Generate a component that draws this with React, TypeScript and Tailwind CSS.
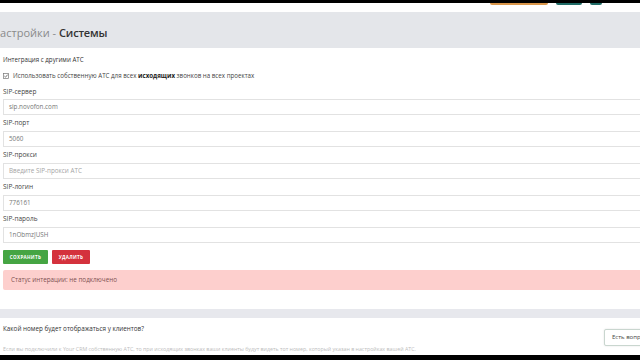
import React from 'react';

const fields = [
  { label: 'SIP-сервер', value: 'sip.novofon.com', placeholder: false },
  { label: 'SIP-порт', value: '5060', placeholder: false },
  { label: 'SIP-прокси', value: 'Введите SIP-прокси АТС', placeholder: true },
  { label: 'SIP-логин', value: '776161', placeholder: false },
  { label: 'SIP-пароль', value: '1nObmzJUSH', placeholder: false },
];

const CheckIcon = () => (
  <svg width="6" height="6" viewBox="0 0 6 6" className="shrink-0">
    <rect x="0.5" y="0.5" width="5" height="5" fill="white" stroke="#777" strokeWidth="0.7" />
    <path d="M1.4 3.1 L2.5 4.2 L4.7 1.6" fill="none" stroke="#555" strokeWidth="0.8" />
  </svg>
);

const App = () => {
  return (
    <div className="w-[640px] h-[360px] overflow-hidden bg-white flex flex-col font-['Open_Sans',sans-serif] text-[#333]">
      <div className="h-[3px] bg-black shrink-0" />
      <div className="h-[9px] shrink-0 bg-white flex items-start justify-end pr-[38px] gap-[8px]">
        <div className="w-[58px] h-[2px] bg-[#d9964a] rounded-b-sm" />
        <div className="w-[26px] h-[2px] bg-[#1f6b66] rounded-b-sm" />
        <div className="w-[12px] h-[2px] bg-[#1f6b66] rounded-b-sm" />
      </div>

      <div className="h-[36px] shrink-0 bg-[#e4e6ea] flex items-center gap-[3px] pt-[6px] -ml-[8px]">
        <span className="text-[11px] text-[#8a8a8a]">Настройки -</span>
        <span className="text-[11px] font-semibold tracking-[-0.2px] text-[#333]">Системы</span>
      </div>

      <div className="h-[261px] shrink-0 flex flex-col px-[3px]">
        <div className="mt-[4px] h-[16px] flex items-center text-[6.2px] text-[#333]">Интеграция с другими АТС</div>
        <div className="h-[16px] flex items-center gap-[4px] text-[6.2px] text-[#444]">
          <CheckIcon />
          <span>
            Использовать собственную АТС для всех <b className="font-bold text-[#222]">исходящих</b> звонков на всех проектах
          </span>
        </div>
        {fields.map((f, i) => (
          <div key={f.label} className="flex flex-col">
            <div className={`${i === 0 ? 'h-[15px]' : 'h-[16px]'} flex items-center text-[6.5px] text-[#444]`}>{f.label}</div>
            <div className="w-[700px] h-[16px] border border-[#e2e2e2] bg-white flex items-center pl-[5px]">
              <span className={`text-[6.3px] ${f.placeholder ? 'text-[#a5a5a5]' : 'text-[#777]'}`}>{f.value}</span>
            </div>
          </div>
        ))}
        <div className="mt-[7px] h-[14px] flex gap-[4px]">
          <div className="w-[45px] h-[14px] bg-[#45a543] rounded-[1px] flex items-center justify-center text-[4.6px] font-bold text-white tracking-[0.3px]">
            СОХРАНИТЬ
          </div>
          <div className="w-[38px] h-[14px] bg-[#d4323d] rounded-[1px] flex items-center justify-center text-[4.6px] font-bold text-white tracking-[0.3px]">
            УДАЛИТЬ
          </div>
        </div>
        <div className="mt-[6px] w-[700px] h-[20px] bg-[#fdcfcd] rounded-[2px] flex items-center pl-[8px] text-[6.3px] text-[#7d5252]">
          Статус интерации: не подключено
        </div>
      </div>

      <div className="h-[9px] shrink-0 bg-[#e7e8ed]" />

      <div className="h-[37px] shrink-0 flex justify-between">
        <div className="flex flex-col px-[3px]">
          <div className="h-[20px] flex items-center pt-[1px] text-[6.3px] text-[#333]">Какой номер будет отображаться у клиентов?</div>
          <div className="h-[17px] flex items-center pt-[7px] text-[5.3px] text-[#bdbdbd] whitespace-nowrap">
            Если вы подключили к Your CRM собственную АТС, то при исходящих звонках ваши клиенты будут видеть тот номер, который указан в настройках вашей АТС.
          </div>
        </div>
        <div className="mt-[11px] w-[44px] h-[17px] -mr-[8px] border border-[#c9d6cf] rounded-[2px] bg-white shadow-[0_0_2px_rgba(0,0,0,0.12)] flex items-center pl-[7px] text-[6px] text-[#444] whitespace-nowrap overflow-hidden">
          Есть вопрос
        </div>
      </div>

      <div className="flex-1 bg-black" />
    </div>
  );
};

export default App;
